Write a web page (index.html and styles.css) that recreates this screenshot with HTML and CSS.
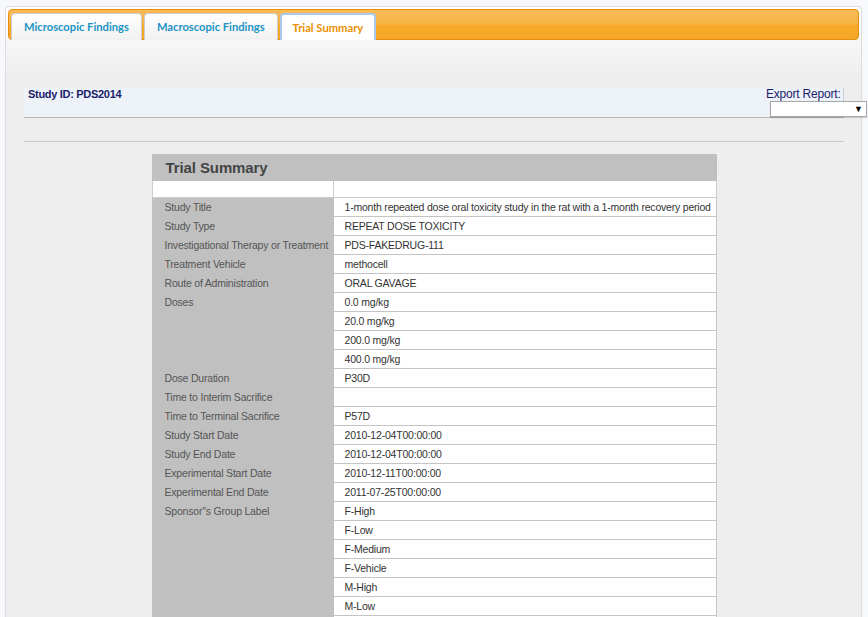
FILE: index.html
```html
<!DOCTYPE html>
<html>
<head>
<meta charset="utf-8">
<title>Trial Summary</title>
<link rel="stylesheet" href="styles.css">
</head>
<body>
<div class="widget">
  <ul class="tabbar">
    <li class="tab"><a>Microscopic Findings</a></li>
    <li class="tab"><a>Macroscopic Findings</a></li>
    <li class="tab active"><a>Trial Summary</a></li>
  </ul>
  <div class="panel">
    <div class="band">
      <div class="study-id">Study ID: PDS2014</div>
      <div class="export">
        <div class="export-label">Export Report:</div>
        <div class="select"><span class="arrow">&#9660;</span></div>
      </div>
    </div>
    <div class="rule"></div>
    <table class="summary">
      <colgroup><col class="c1"><col class="c2"></colgroup>
      <thead>
        <tr><th colspan="2">Trial Summary</th></tr>
      </thead>
      <tbody>
        <tr class="blank"><td class="lbl"></td><td class="val"></td></tr>
        <tr><td class="lbl">Study Title</td><td class="val">1-month repeated dose oral toxicity study in the rat with a 1-month recovery period</td></tr>
        <tr><td class="lbl">Study Type</td><td class="val">REPEAT DOSE TOXICITY</td></tr>
        <tr><td class="lbl">Investigational Therapy or Treatment</td><td class="val">PDS-FAKEDRUG-111</td></tr>
        <tr><td class="lbl">Treatment Vehicle</td><td class="val">methocell</td></tr>
        <tr><td class="lbl">Route of Administration</td><td class="val">ORAL GAVAGE</td></tr>
        <tr><td class="lbl" rowspan="4">Doses</td><td class="val">0.0 mg/kg</td></tr>
        <tr><td class="val">20.0 mg/kg</td></tr>
        <tr><td class="val">200.0 mg/kg</td></tr>
        <tr><td class="val">400.0 mg/kg</td></tr>
        <tr><td class="lbl">Dose Duration</td><td class="val">P30D</td></tr>
        <tr><td class="lbl">Time to Interim Sacrifice</td><td class="val"></td></tr>
        <tr><td class="lbl">Time to Terminal Sacrifice</td><td class="val">P57D</td></tr>
        <tr><td class="lbl">Study Start Date</td><td class="val">2010-12-04T00:00:00</td></tr>
        <tr><td class="lbl">Study End Date</td><td class="val">2010-12-04T00:00:00</td></tr>
        <tr><td class="lbl">Experimental Start Date</td><td class="val">2010-12-11T00:00:00</td></tr>
        <tr><td class="lbl">Experimental End Date</td><td class="val">2011-07-25T00:00:00</td></tr>
        <tr><td class="lbl" rowspan="8">Sponsor''s Group Label</td><td class="val">F-High</td></tr>
        <tr><td class="val">F-Low</td></tr>
        <tr><td class="val">F-Medium</td></tr>
        <tr><td class="val">F-Vehicle</td></tr>
        <tr><td class="val">M-High</td></tr>
        <tr><td class="val">M-Low</td></tr>
        <tr><td class="val">M-Medium</td></tr>
        <tr><td class="val">M-Vehicle</td></tr>
      </tbody>
    </table>
  </div>
</div>
</body>
</html>
```

FILE: styles.css
```css
html, body {
  margin: 0;
  padding: 0;
}
body {
  background: #f7f8fc;
  padding: 6px 6px 0 5px;
  font-family: "Liberation Sans", Arial, sans-serif;
}
.widget {
  border: 1px solid #dddddd;
  border-radius: 4px;
  background: linear-gradient(#ffffff 0, #eeeeee 70px);
  padding: 2px;
  min-height: 700px;
}
.tabbar {
  list-style: none;
  margin: 0;
  padding: 3px 2px 0;
  display: flex;
  gap: 2px;
  border: 1px solid #e78f08;
  border-radius: 4px;
  background: linear-gradient(#f9bb58 0, #f8b547 45%, #f6a828 55%, #f6a828 100%);
}
.tab {
  height: 27px;
  margin-bottom: -1px;
  border: 1px solid #cccccc;
  border-bottom: none;
  border-radius: 4px 4px 0 0;
  background: linear-gradient(#ffffff, #f1f1f1);
  box-sizing: border-box;
}
.tab a {
  display: block;
  padding: 0 12px;
  line-height: 26px;
  font-family: Lato, "Open Sans", sans-serif;
  font-weight: 700;
  font-size: 11.2px;
  color: #1c94c4;
}
.tab.active {
  background: #ffffff;
  border-color: #a9c8ec;
  border-width: 2px 2px 0;
}
.tab.active a {
  color: #eb8f00;
  padding: 0 11px;
  line-height: 25px;
}
.panel {
  padding: 48px 15px 0 16px;
}
.band {
  display: flex;
  justify-content: space-between;
  align-items: flex-start;
  height: 29px;
  background: #edf1f8;
  border-bottom: 1px solid #b8b8b8;
}
.study-id {
  padding: 0 0 0 4px;
  font-size: 11px;
  line-height: 13px;
  letter-spacing: -0.3px;
  font-weight: bold;
  color: #1b1d6b;
}
.export {
  width: 78px;
  display: flex;
  flex-direction: column;
}
.export-label {
  font-size: 12px;
  line-height: 13px;
  letter-spacing: -0.2px;
  color: #1b1d6b;
  border-right: 1px solid #c8cdd6;
  padding-right: 3px;
  text-align: right;
  white-space: nowrap;
}
.select {
  width: 95px;
  height: 14px;
  margin-left: 4px;
  border: 1px solid #a6a6a6;
  background: #ffffff;
  box-shadow: 0 1px 1px rgba(0,0,0,0.15);
  position: relative;
  flex: none;
}
.arrow {
  position: absolute;
  right: 3px;
  top: 0;
  font-size: 9px;
  line-height: 14px;
  color: #000;
}
.rule {
  margin-top: 23px;
  border-top: 1px solid #c8c8c8;
}
.summary {
  margin: 12px auto 0;
  width: 565px;
  table-layout: fixed;
  border-collapse: collapse;
  font-size: 10.5px;
  letter-spacing: -0.2px;
}
.summary col.c1 {
  width: 181px;
}
.summary th {
  background: #c0c0c0;
  height: 25px;
  padding: 0 0 0 13px;
  text-align: left;
  font-size: 15px;
  letter-spacing: -0.1px;
  font-weight: bold;
  color: #444444;
  border: 1px solid #c0c0c0;
}
.summary td {
  line-height: 18px;
  padding: 0;
  vertical-align: top;
  white-space: nowrap;
  overflow: hidden;
}
.summary td.lbl {
  padding-left: 12px;
  background: #c0c0c0;
  color: #555555;
  border: 1px solid #c0c0c0;
}
.summary td.val {
  padding-left: 11px;
  background: #ffffff;
  color: #333333;
  border: 1px solid #c4c4c4;
}
.summary tr.blank td {
  height: 16px;
  line-height: 16px;
  background: #ffffff;
  border: 1px solid #cccccc;
}
```
